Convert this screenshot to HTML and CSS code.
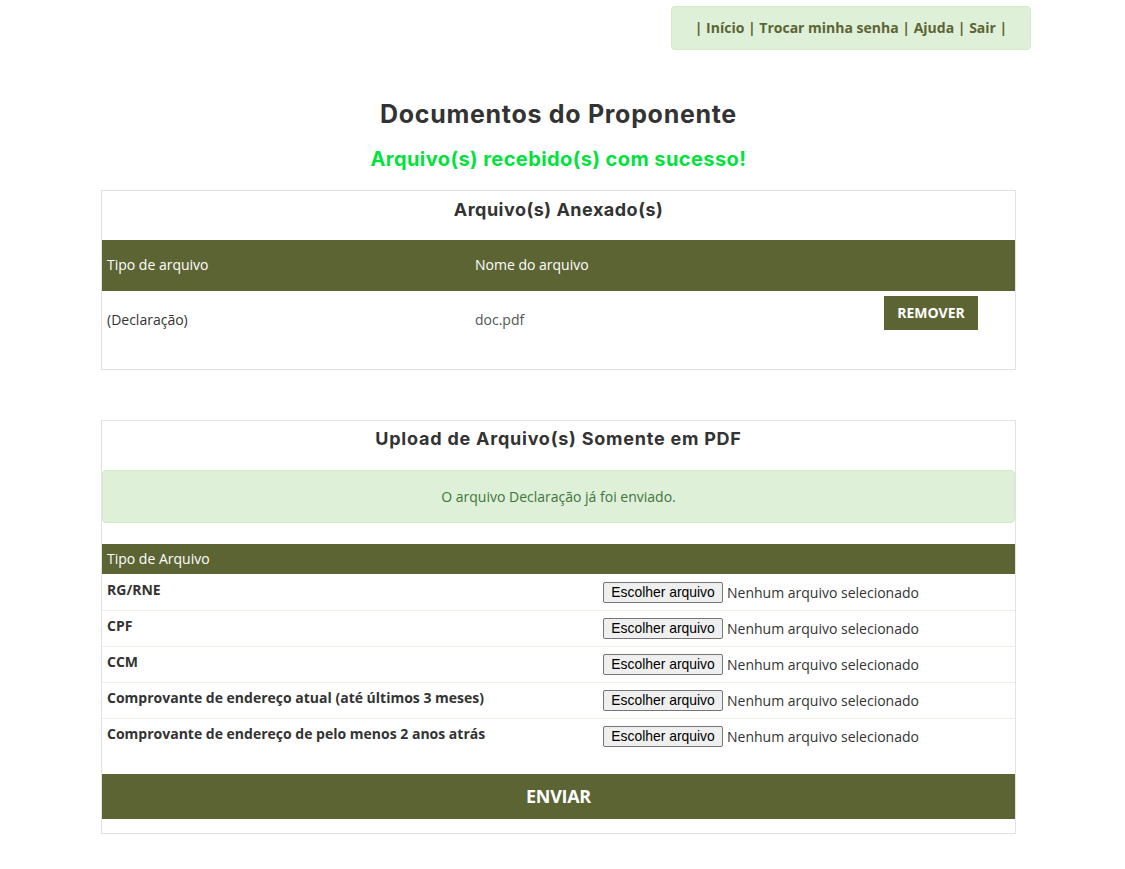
FILE: index.html
```html
<!DOCTYPE html>
<html lang="pt-BR">
<head>
<meta charset="utf-8">
<title>Documentos do Proponente</title>
<link rel="stylesheet" href="styles.css">
</head>
<body>
<div class="topbar">
  <nav class="usermenu">| <a href="#">Início</a> | <a href="#">Trocar minha senha</a> | <a href="#">Ajuda</a> | <a href="#">Sair</a> |</nav>
</div>
<main class="page">
  <h1 class="title">Documentos do Proponente</h1>
  <p class="success">Arquivo(s) recebido(s) com sucesso!</p>

  <section class="panel">
    <h2 class="panel-title t-att">Arquivo(s) Anexado(s)</h2>
    <div class="att-table">
      <div class="att-head">
        <div class="cell">Tipo de arquivo</div>
        <div class="cell">Nome do arquivo</div>
        <div class="cell"></div>
      </div>
      <div class="att-row">
        <div class="cell">(Declaração)</div>
        <div class="cell filename">doc.pdf</div>
        <div class="cell action"><button class="btn-remove" type="button">REMOVER</button></div>
      </div>
    </div>
  </section>

  <section class="panel upload">
    <h2 class="panel-title t-up">Upload de Arquivo(s) Somente em PDF</h2>
    <div class="alert">O arquivo Declaração já foi enviado.</div>
    <div class="up-table">
      <div class="up-head">Tipo de Arquivo</div>
      <div class="up-row first">
        <div class="label">RG/RNE</div>
        <div class="file"><button class="choose" type="button">Escolher arquivo</button><span class="nofile">Nenhum arquivo selecionado</span></div>
      </div>
      <div class="up-row">
        <div class="label">CPF</div>
        <div class="file"><button class="choose" type="button">Escolher arquivo</button><span class="nofile">Nenhum arquivo selecionado</span></div>
      </div>
      <div class="up-row">
        <div class="label">CCM</div>
        <div class="file"><button class="choose" type="button">Escolher arquivo</button><span class="nofile">Nenhum arquivo selecionado</span></div>
      </div>
      <div class="up-row">
        <div class="label">Comprovante de endereço atual (até últimos 3 meses)</div>
        <div class="file"><button class="choose" type="button">Escolher arquivo</button><span class="nofile">Nenhum arquivo selecionado</span></div>
      </div>
      <div class="up-row">
        <div class="label">Comprovante de endereço de pelo menos 2 anos atrás</div>
        <div class="file"><button class="choose" type="button">Escolher arquivo</button><span class="nofile">Nenhum arquivo selecionado</span></div>
      </div>
    </div>
    <button class="btn-send" type="button">ENVIAR</button>
  </section>
</main>
</body>
</html>
```

FILE: styles.css
```css
* { box-sizing: border-box; }
body {
  margin: 0;
  font-family: "Open Sans", "Liberation Sans", sans-serif;
  font-size: 14px;
  line-height: 20px;
  color: #333;
  background: #fff;
}
.topbar {
  display: flex;
  justify-content: flex-end;
  padding: 6px 94px 0 0;
}
.usermenu {
  width: 360px;
  height: 44px;
  background: #dff0d8;
  border: 1px solid #d6e9c6;
  border-radius: 4px;
  display: flex;
  align-items: center;
  justify-content: center;
  font-weight: 700;
  color: #5c6434;
  white-space: pre;
}
.usermenu a { color: #5c6434; text-decoration: none; }

.page {
  width: 915px;
  margin-left: 101px;
  padding-bottom: 30px;
}
.title {
  margin: 51px 0 0;
  text-align: center;
  font-family: Inter, "Liberation Sans", sans-serif;
  font-weight: 700;
  font-size: 25px;
  line-height: 26px;
  letter-spacing: 0.7px;
  color: #333;
}
.success {
  margin: 20px 0 0;
  text-align: center;
  font-family: Inter, "Liberation Sans", sans-serif;
  font-weight: 700;
  font-size: 20px;
  line-height: 24px;
  letter-spacing: 0.43px;
  color: #00e23c;
}
.panel {
  margin-top: 19px;
  border: 1px solid #e3e3e3;
  padding-bottom: 19px;
}
.panel-title {
  margin: 8px 0 0;
  text-align: center;
  font-family: Inter, "Liberation Sans", sans-serif;
  font-weight: 700;
  font-size: 18px;
  line-height: 22px;
  color: #333;
}
.t-att { letter-spacing: 0.5px; }
.t-up { letter-spacing: 0.77px; }
.att-table { margin-top: 19px; }
.att-head, .att-row {
  display: grid;
  grid-template-columns: 368px 414px 1fr;
}
.att-head {
  background: #5c6434;
  color: #fff;
  height: 51px;
  align-items: center;
  padding-bottom: 1px;
}
.att-row { height: 59px; align-items: center; padding-bottom: 1px; }
.cell { padding: 0 5px; }
.filename { color: #555; }
.action { align-self: start; padding: 5px 0 0; }
.btn-remove {
  background: #5c6434;
  color: #fff;
  border: 0;
  width: 94px;
  height: 34px;
  font-family: "Open Sans", sans-serif;
  font-weight: 700;
  font-size: 14px;
  padding: 0 0 1px;
  cursor: pointer;
}

.upload { margin-top: 50px; padding-bottom: 14px; }
.upload .panel-title { margin-top: 7px; }
.alert {
  margin-top: 20px;
  height: 53px;
  background: #dff0d8;
  border: 1px solid #d6e9c6;
  border-radius: 4px;
  color: #3c763d;
  display: flex;
  align-items: center;
  justify-content: center;
}
.up-table { margin-top: 21px; }
.up-head {
  background: #5c6434;
  color: #fff;
  height: 30px;
  padding: 5px;
}
.up-row {
  display: grid;
  grid-template-columns: 501px 1fr;
  height: 36px;
  border-top: 1px solid #f1f0e8;
}
.up-row.first { border-top-color: transparent; }
.label {
  padding: 5px 5px 0;
  font-weight: 700;
}
.file {
  padding-top: 7px;
  display: flex;
  align-items: center;
  height: 28px;
}
.choose {
  font-family: "Liberation Sans", Arial, sans-serif;
  font-size: 13.9px;
  height: 21px;
  width: 120px;
  padding: 0 0 1px;
  background: #efefef;
  border: 1px solid #767676;
  border-radius: 2px;
  color: #000;
}
.nofile { margin-left: 4px; }
.btn-send {
  display: block;
  width: 100%;
  margin-top: 20px;
  height: 45px;
  padding: 0 0 2px;
  background: #5c6434;
  color: #fff;
  border: 0;
  font-family: "Open Sans", sans-serif;
  font-weight: 700;
  font-size: 18px;
  letter-spacing: -0.3px;
}
```
